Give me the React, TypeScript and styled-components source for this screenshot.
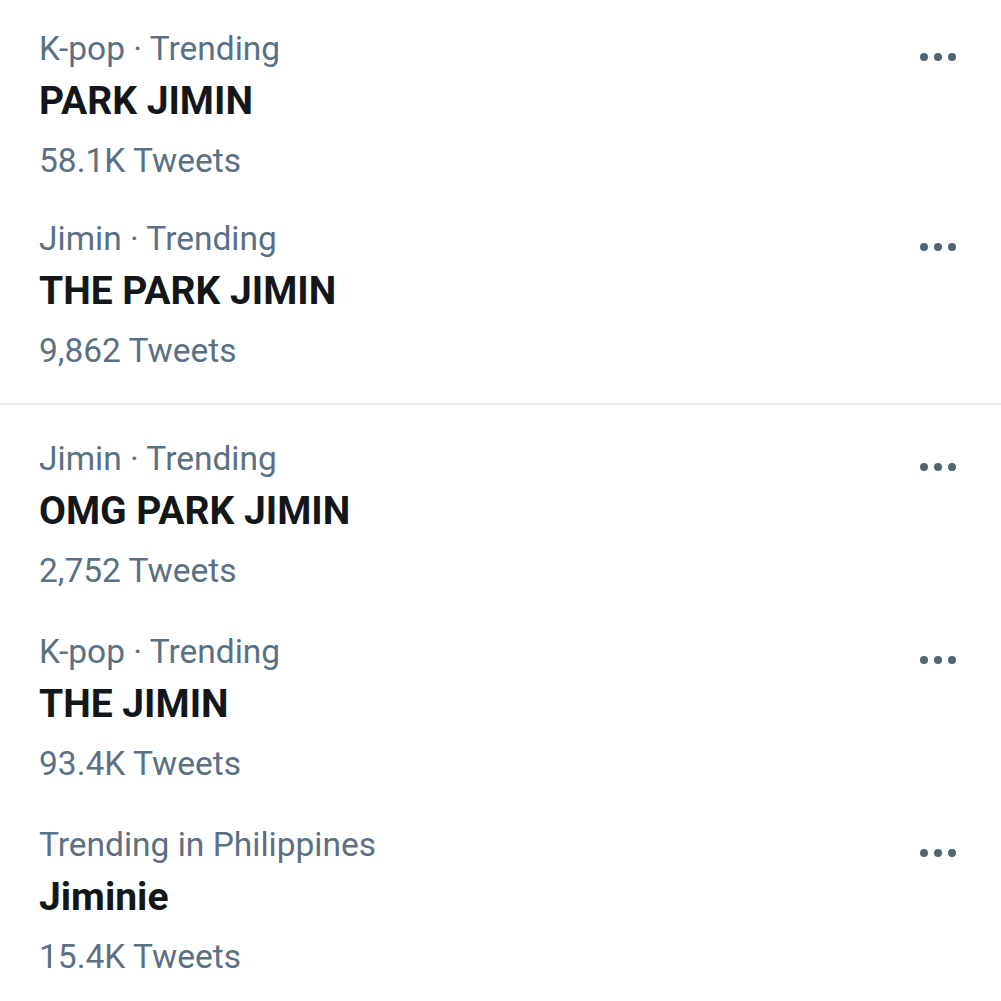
import React from 'react';
import styled, { createGlobalStyle } from 'styled-components';

const GlobalStyle = createGlobalStyle`
  html, body {
    margin: 0;
    padding: 0;
    background: #ffffff;
  }
  body {
    font-family: Roboto, 'Noto Sans', Arial, sans-serif;
    -webkit-font-smoothing: antialiased;
  }
`;

const Page = styled.div`
  width: 1001px;
  height: 1001px;
  overflow: hidden;
  background: #ffffff;
`;

const Section = styled.div`
  display: flex;
  flex-direction: column;
`;

const Divider = styled.div`
  height: 2px;
  background: #e6ebef;
  margin: 23px 0 5px;
`;

const Item = styled.div<{ $height: number }>`
  display: flex;
  align-items: flex-start;
  justify-content: space-between;
  height: ${(p) => p.$height}px;
  box-sizing: border-box;
  padding: 27px 45px 0 39px;
`;

const Texts = styled.div`
  display: flex;
  flex-direction: column;
`;

const Meta = styled.div`
  font-size: 33.5px;
  line-height: 44px;
  color: #5b7083;
  white-space: nowrap;
`;

const Title = styled.div`
  font-size: 39px;
  line-height: 60px;
  font-weight: 700;
  color: #14171a;
  white-space: nowrap;
`;

const Count = styled.div`
  font-size: 33.5px;
  line-height: 44px;
  margin-top: 8px;
  color: #5b7083;
  white-space: nowrap;
`;

const MoreButton = styled.div`
  display: flex;
  gap: 6px;
  margin-top: 26px;
`;

const Dot = styled.span`
  width: 8px;
  height: 8px;
  border-radius: 50%;
  background: #536471;
`;

type Trend = { meta: string; title: string; count: string };

const first: Trend[] = [
  { meta: 'K-pop · Trending', title: 'PARK JIMIN', count: '58.1K Tweets' },
  { meta: 'Jimin · Trending', title: 'THE PARK JIMIN', count: '9,862 Tweets' },
];

const second: Trend[] = [
  { meta: 'Jimin · Trending', title: 'OMG PARK JIMIN', count: '2,752 Tweets' },
  { meta: 'K-pop · Trending', title: 'THE JIMIN', count: '93.4K Tweets' },
  { meta: 'Trending in Philippines', title: 'Jiminie', count: '15.4K Tweets' },
];

const TrendItem = ({ trend, height }: { trend: Trend; height: number }) => (
  <Item $height={height}>
    <Texts>
      <Meta>{trend.meta}</Meta>
      <Title>{trend.title}</Title>
      <Count>{trend.count}</Count>
    </Texts>
    <MoreButton>
      <Dot />
      <Dot />
      <Dot />
    </MoreButton>
  </Item>
);

export default function App() {
  return (
    <Page>
      <GlobalStyle />
      <Section>
        {first.map((t) => <TrendItem key={t.title} trend={t} height={190} />)}
      </Section>
      <Divider />
      <Section>
        {second.map((t) => <TrendItem key={t.title} trend={t} height={193} />)}
      </Section>
    </Page>
  );
}
